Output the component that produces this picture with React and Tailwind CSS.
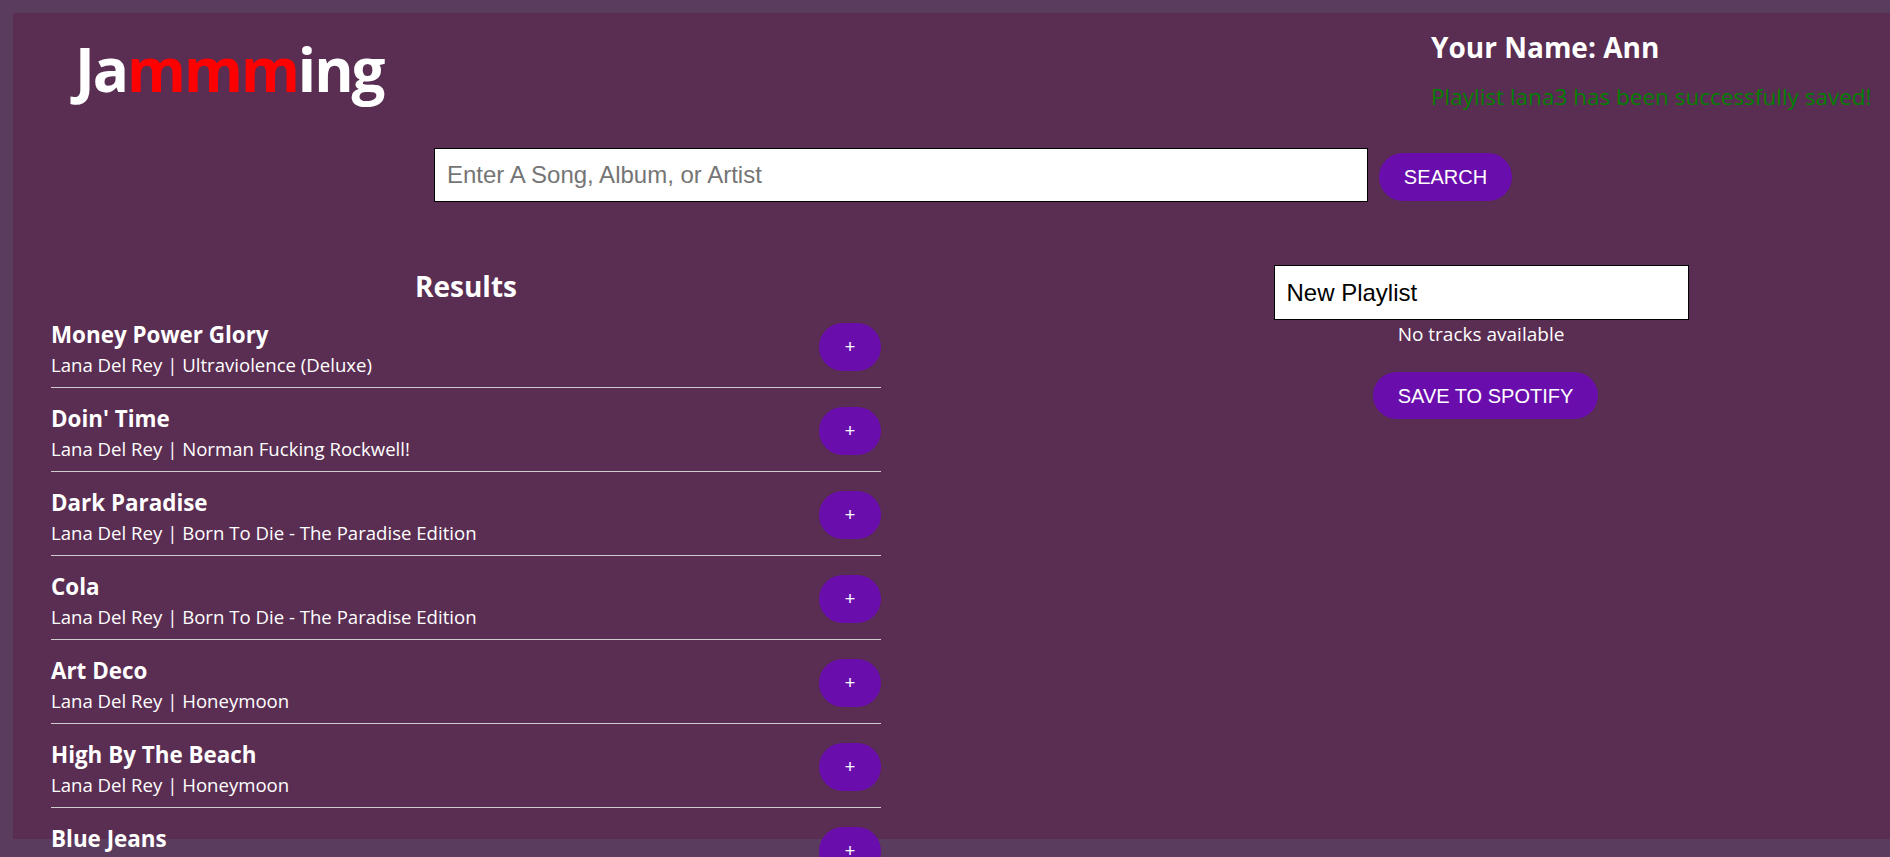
import { useState } from 'react';

const tracks = [
  { id: 1, name: 'Money Power Glory', artist: 'Lana Del Rey', album: 'Ultraviolence (Deluxe)' },
  { id: 2, name: "Doin' Time", artist: 'Lana Del Rey', album: 'Norman Fucking Rockwell!' },
  { id: 3, name: 'Dark Paradise', artist: 'Lana Del Rey', album: 'Born To Die - The Paradise Edition' },
  { id: 4, name: 'Cola', artist: 'Lana Del Rey', album: 'Born To Die - The Paradise Edition' },
  { id: 5, name: 'Art Deco', artist: 'Lana Del Rey', album: 'Honeymoon' },
  { id: 6, name: 'High By The Beach', artist: 'Lana Del Rey', album: 'Honeymoon' },
  { id: 7, name: 'Blue Jeans', artist: 'Lana Del Rey', album: 'Born To Die - The Paradise Edition' },
  { id: 8, name: 'Young And Beautiful', artist: 'Lana Del Rey', album: 'The Great Gatsby' }
];

const segoe = "font-['Open_Sans',sans-serif]";
const arial = "font-['Liberation_Sans',Arial,sans-serif]";

const Track = ({ track, onAdd }) => (
  <div className="flex h-[84px] items-start justify-between border-b border-[#cccccc]">
    <div className={`pt-[16px] text-white ${segoe}`}>
      <h3 className="text-[22.4px] font-bold leading-[30px]">{track.name}</h3>
      <p className="text-[18.6px] leading-[29px]">
        {track.artist} | {track.album}
      </p>
    </div>
    <button
      type="button"
      onClick={() => onAdd(track)}
      className={`mt-[19px] h-[48px] w-[62px] shrink-0 rounded-full bg-[#6a0dad] text-[18px] text-white ${arial}`}
    >
      +
    </button>
  </div>
);

export default function App() {
  const [term, setTerm] = useState('');
  const [playlistName, setPlaylistName] = useState('New Playlist');

  return (
    <div className="h-screen overflow-hidden bg-[#5a3d5e] pl-[13px] pt-[13px]">
      <div className="h-[826px] w-full bg-[#5a2d52]">
        <header className="flex h-[135px] items-start">
          <h1 className={`ml-[62px] mt-[25px] text-[60px] font-bold leading-[62px] tracking-[-2px] text-white ${segoe}`}>
            Ja<span className="text-[#ff0000]">mmm</span>ing
          </h1>
          <div className={`ml-auto mt-[20px] w-[459px] ${segoe}`}>
            <h2 className="text-[28px] font-bold leading-[28px] text-white">Your Name: Ann</h2>
            <p className="mt-[25px] text-[22.5px] leading-[22px] text-[#008000]">
              Playlist lana3 has been successfully saved!
            </p>
          </div>
        </header>

        <div className="ml-[421px] flex items-start">
          <input
            className={`h-[54px] w-[934px] border border-black bg-white px-[12px] text-[24px] text-black placeholder:text-[#757575] ${arial}`}
            placeholder="Enter A Song, Album, or Artist"
            value={term}
            onChange={(event) => setTerm(event.target.value)}
          />
          <button
            type="button"
            className={`ml-[11px] mt-[5px] h-[48px] w-[133px] rounded-full bg-[#6a0dad] text-[20px] text-white ${arial}`}
          >
            SEARCH
          </button>
        </div>

        <div className="mt-[63px] flex items-start">
          <section className="ml-[38px] w-[830px] shrink-0 pt-[3px]">
            <h2 className={`text-center text-[28px] font-bold leading-[36px] text-white ${segoe}`}>Results</h2>
            {tracks.map((track) => (
              <Track key={track.id} track={track} onAdd={() => {}} />
            ))}
          </section>

          <section className="ml-[200px] flex w-[800px] shrink-0 flex-col items-center">
            <input
              className={`h-[55px] w-[415px] border border-black bg-white px-[12px] text-[24px] text-black ${arial}`}
              value={playlistName}
              onChange={(event) => setPlaylistName(event.target.value)}
            />
            <p className={`mt-[2px] text-[19px] leading-[24px] text-white ${segoe}`}>No tracks available</p>
            <button
              type="button"
              className={`ml-[9px] mt-[26px] h-[47px] w-[225px] rounded-full bg-[#6a0dad] text-[20px] text-white ${arial}`}
            >
              SAVE TO SPOTIFY
            </button>
          </section>
        </div>
      </div>
    </div>
  );
}
